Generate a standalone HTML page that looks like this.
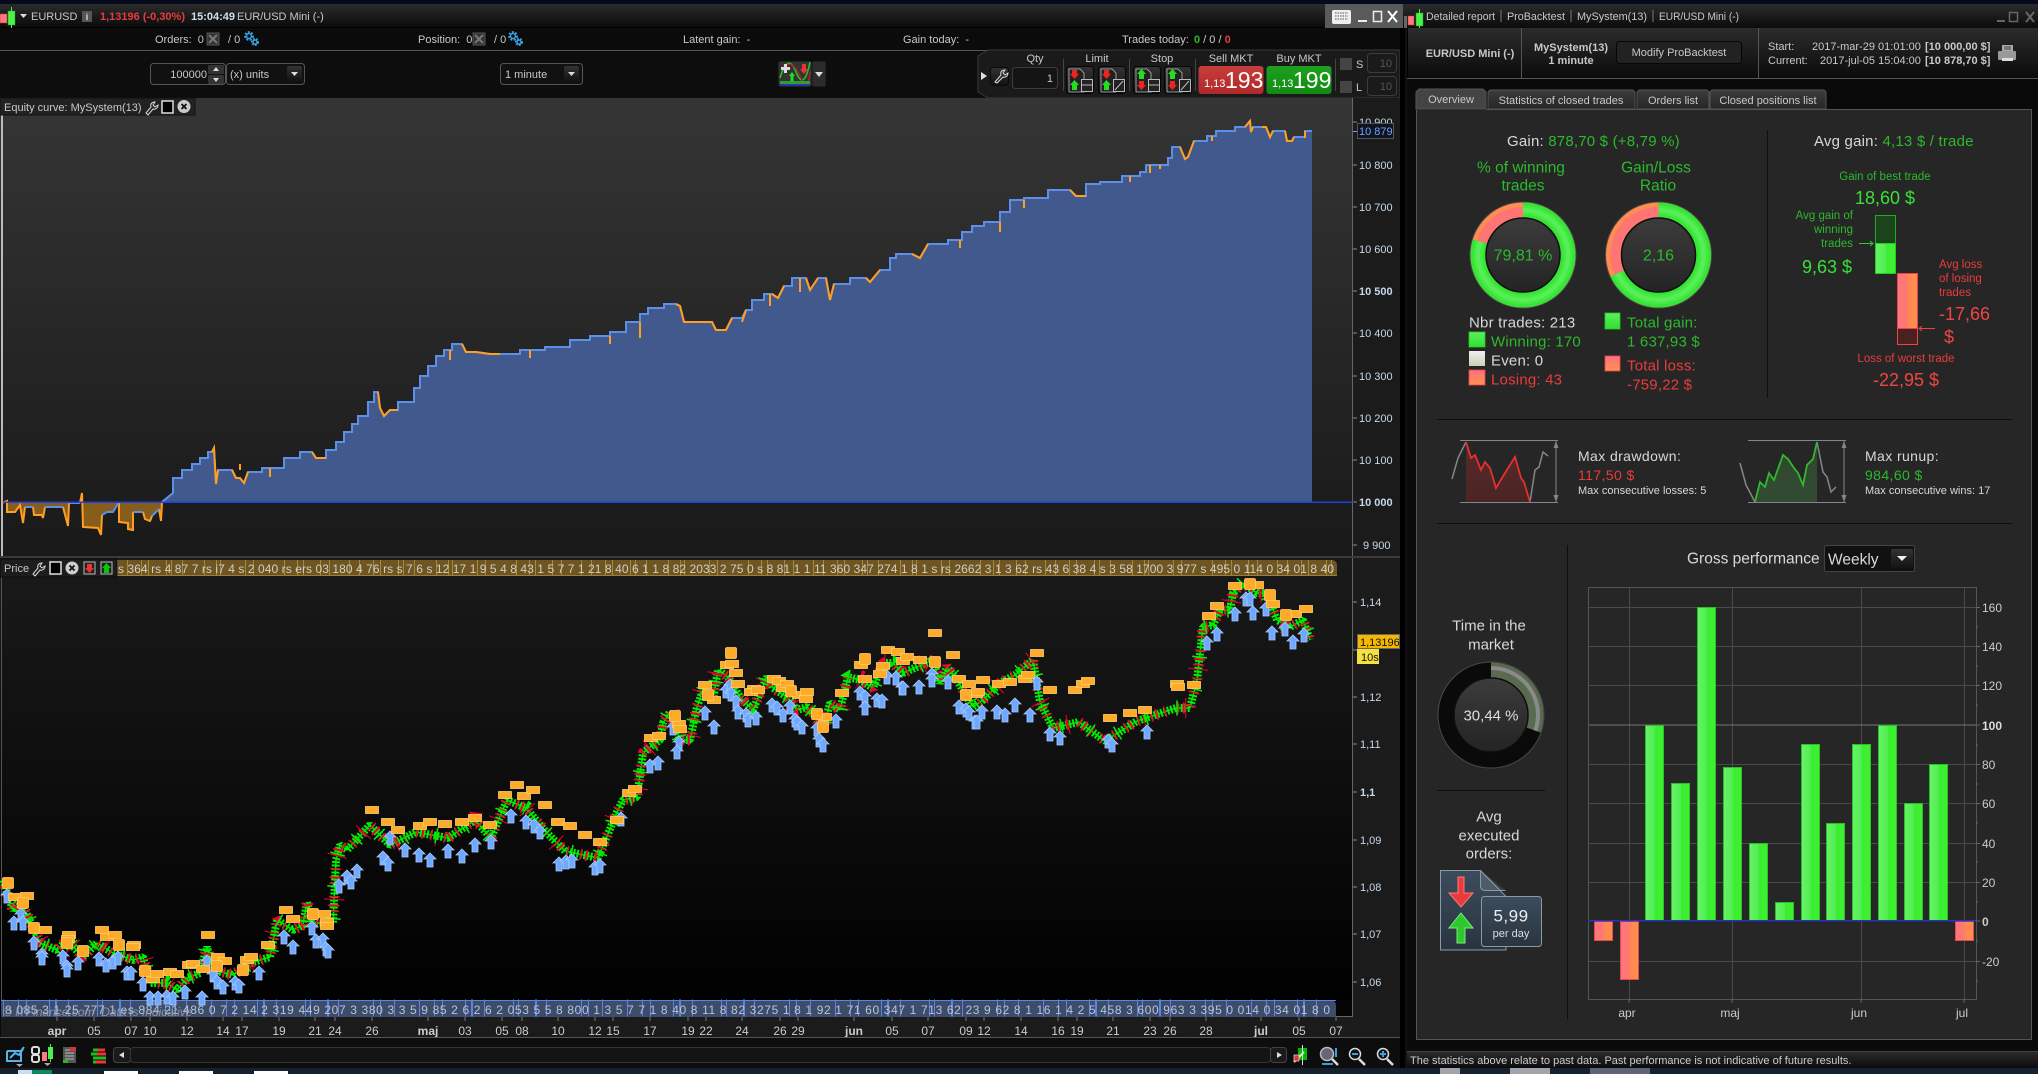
<!DOCTYPE html>
<html><head><meta charset="utf-8"><title>EURUSD</title>
<style>
html,body{margin:0;padding:0;background:#050505;width:2038px;height:1074px;overflow:hidden}
svg{display:block;font-family:"Liberation Sans",Arial,sans-serif}
text{dominant-baseline:central;white-space:pre;transform:translateY(.8px)}
.m{text-anchor:middle}.e{text-anchor:end}.b{font-weight:bold}
.s{font-size:11px;fill:#c8c8c8}
.g{fill:#2db82d}.r{fill:#e83c3c}.w{fill:#d8d8d8}
.G{fill:#38e038}.R{fill:#f04545}
.sc{font-size:11px;fill:#c6d8e8}
.ax{font-size:12px;fill:#ccc;text-anchor:middle}
.l{letter-spacing:.2px}
</style></head><body>
<svg width="2038" height="1074" viewBox="0 0 2038 1074" xmlns="http://www.w3.org/2000/svg">
<defs>
<linearGradient id="tb" x1="0" y1="0" x2="0" y2="1"><stop offset="0" stop-color="#2c2c2c"/><stop offset="1" stop-color="#0b0b0b"/></linearGradient>
<linearGradient id="eq" x1="0" y1="0" x2="0" y2="1"><stop offset="0" stop-color="#353535"/><stop offset="1" stop-color="#191919"/></linearGradient>
<linearGradient id="pr" x1="0" y1="0" x2="0" y2="1"><stop offset="0" stop-color="#1a1a1a"/><stop offset="1" stop-color="#000"/></linearGradient>
<linearGradient id="disc" x1="0" y1="0" x2="0" y2="1"><stop offset="0" stop-color="#3c3c3c"/><stop offset="1" stop-color="#242424"/></linearGradient>
<linearGradient id="gb" x1="0" y1="0" x2="1" y2="0"><stop offset="0" stop-color="#66f266"/><stop offset=".5" stop-color="#52ee52"/><stop offset=".55" stop-color="#39ee30"/><stop offset="1" stop-color="#40f030"/></linearGradient>
<linearGradient id="rb" x1="0" y1="0" x2="1" y2="0"><stop offset="0" stop-color="#ff7480"/><stop offset=".5" stop-color="#ff7a70"/><stop offset=".55" stop-color="#ff8a50"/><stop offset="1" stop-color="#ff8c50"/></linearGradient>
<linearGradient id="gs" x1="0" y1="0" x2="0" y2="1"><stop offset="0" stop-color="#5cf05c"/><stop offset="1" stop-color="#30e030"/></linearGradient>
<linearGradient id="rs" x1="0" y1="0" x2="0" y2="1"><stop offset="0" stop-color="#ff7080"/><stop offset="1" stop-color="#ff9050"/></linearGradient>
<linearGradient id="ws" x1="0" y1="0" x2="0" y2="1"><stop offset="0" stop-color="#f0f0f0"/><stop offset="1" stop-color="#c8d0b8"/></linearGradient>
<linearGradient id="btn" x1="0" y1="0" x2="0" y2="1"><stop offset="0" stop-color="#333"/><stop offset="1" stop-color="#111"/></linearGradient>
<linearGradient id="tab" x1="0" y1="0" x2="0" y2="1"><stop offset="0" stop-color="#3c3c3c"/><stop offset="1" stop-color="#262626"/></linearGradient>
<linearGradient id="sell" x1="0" y1="0" x2="0" y2="1"><stop offset="0" stop-color="#c83c3c"/><stop offset="1" stop-color="#b02828"/></linearGradient>
<linearGradient id="buy" x1="0" y1="0" x2="0" y2="1"><stop offset="0" stop-color="#1ea01e"/><stop offset="1" stop-color="#128a12"/></linearGradient>
<linearGradient id="doc" x1="0" y1="0" x2="0" y2="1"><stop offset="0" stop-color="#3c4c5c"/><stop offset="1" stop-color="#2a3440"/></linearGradient>
<linearGradient id="ddr" x1="0" y1="0" x2="0" y2="1"><stop offset="0" stop-color="#5a2a2a"/><stop offset="1" stop-color="#4a2424"/></linearGradient>
<linearGradient id="ddg" x1="0" y1="0" x2="0" y2="1"><stop offset="0" stop-color="#2f4a2f"/><stop offset="1" stop-color="#324a32"/></linearGradient>
<clipPath id="up"><rect x="0" y="98" width="1353" height="404"/></clipPath>
<clipPath id="dn"><rect x="0" y="502" width="1353" height="54"/></clipPath>
<g id="a"><polygon points="0,-7 6,-1 3,-1 3,7 -3,7 -3,-1 -6,-1" fill="#6ea8ff" stroke="#a9cbff" stroke-width=".8"/></g>
<g id="o"><rect x="-6.5" y="-3.5" width="13" height="7" fill="#ffab2a" stroke="#ffcf6c" stroke-width=".8"/></g>
<g id="q"><rect x="-5.5" y="-5.5" width="11" height="11" rx="1.5" fill="#ffab2a" stroke="#ffcf6c" stroke-width=".8"/></g>
<path id="p" fill="none" stroke-linejoin="bevel" d="M3,880 13,910 20,900 33,927 40,943 57,950 67,940 83,957 97,943 113,953 133,960 143,957 150,983 167,983 177,990 187,978 200,973 207,947 213,970 233,975 250,963 270,957 277,920 293,930 303,925 307,902 313,923 333,923 336,860 340,845 347,850 370,825 390,845 416,832 448,838 475,820 491,838 507,800 526,808 546,832 565,851 598,858 617,812 623,800 637,797 643,753 650,747 660,740 663,723 670,712 680,740 690,740 697,707 703,690 713,700 718,670 728,677 740,697 753,710 760,693 767,677 773,688 787,697 797,710 807,707 813,713 823,730 830,703 840,710 848,677 860,680 873,688 883,663 893,663 903,673 917,667 933,660 940,683 947,667 957,680 973,707 983,700 1000,683 1015,675 1033,660 1040,702 1053,728 1079,722 1105,741 1137,721 1176,708 1190,708 1197,680 1203,627 1213,625 1220,610 1230,610 1233,593 1243,583 1257,593 1267,593 1277,620 1290,627 1303,620 1310,640"/>
</defs>

<!-- page background -->
<rect width="2038" height="1074" fill="#0a0a0a"/>
<rect width="2038" height="4" fill="#050a1c"/>

<!-- LEFT TITLE -->
<rect x="0" y="4" width="1404" height="23" fill="url(#tb)"/>
<rect x="0" y="27" width="1404" height="1" fill="#000"/>
<rect x="0" y="14" width="7" height="9" fill="#ff7a80" stroke="#c33" stroke-width=".5"/>
<rect x="8" y="11" width="7" height="14" fill="#4df04d" stroke="#1a1" stroke-width=".5"/><rect x="11" y="7" width="1" height="22" fill="#4df04d"/>
<polygon points="20,14 27,14 23.5,18" fill="#ddd"/>
<text x="31" y="16" class="s">EURUSD</text>
<rect x="82" y="11" width="10" height="11" fill="#555"/><text x="87" y="16" class="m b" font-size="9" fill="#ddd">i</text>
<text x="100" y="16" font-size="11" fill="#e63c3c" font-weight="bold">1,13196 (-0,30%)</text>
<text x="191" y="16" class="b" font-size="11" fill="#cfe0ee">15:04:49</text>
<text x="237" y="16" class="s">EUR/USD Mini (-)</text>
<rect x="1325" y="4" width="78" height="24" fill="#5a5a5a"/>
<rect x="1332" y="10" width="19" height="14" rx="2" fill="#f0f0f0"/><path d="M1335 13h13M1335 16h13M1335 19h13" stroke="#555" stroke-dasharray="1.5 1" fill="none"/>
<rect x="1358" y="20" width="9" height="2" fill="#eee"/><rect x="1373.5" y="11.500" width="8" height="10" fill="none" stroke="#eee" stroke-width="1.500"/>
<path d="M1388 11l9 11M1397 11l-9 11" stroke="#fff" stroke-width="2"/>

<!-- row2 -->
<rect x="0" y="28" width="1404" height="22" fill="#0b0b0b"/><rect x="0" y="50" width="1404" height="1" fill="#555"/>
<text x="155" y="39" class="s">Orders:  0</text><rect x="207" y="33" width="12" height="12" fill="#333" stroke="#555"/><path d="M209 35l8 8M217 35l-8 8" stroke="#777" stroke-width="2"/>
<text x="228" y="39" class="s">/ 0</text>
<g fill="none" stroke="#39a0e0"><circle cx="249" cy="36" r="2.500" stroke-width="1.500"/><circle cx="249" cy="36" r="4" stroke-width="1.800" stroke-dasharray="2 1.500"/><circle cx="255" cy="42" r="2" stroke-width="1.500"/><circle cx="255" cy="42" r="3.300" stroke-width="1.500" stroke-dasharray="2 1.300"/></g>
<text x="418" y="39" class="s">Position:  0</text><rect x="473" y="33" width="12" height="12" fill="#333" stroke="#555"/><path d="M475 35l8 8M483 35l-8 8" stroke="#777" stroke-width="2"/>
<text x="494" y="39" class="s">/ 0</text>
<g fill="none" stroke="#39a0e0"><circle cx="513" cy="36" r="2.500" stroke-width="1.500"/><circle cx="513" cy="36" r="4" stroke-width="1.800" stroke-dasharray="2 1.500"/><circle cx="519" cy="42" r="2" stroke-width="1.500"/><circle cx="519" cy="42" r="3.300" stroke-width="1.500" stroke-dasharray="2 1.300"/></g>
<text x="683" y="39" class="s">Latent gain:  -</text>
<text x="903" y="39" class="s">Gain today:  -</text>
<text x="1122" y="39" class="s">Trades today:</text>
<text x="1194" y="39" font-size="11"><tspan fill="#2db82d" font-weight="bold">0</tspan><tspan fill="#ccc"> / 0 / </tspan><tspan fill="#e83c3c" font-weight="bold">0</tspan></text>

<!-- row3 -->
<rect x="0" y="51" width="1404" height="47" fill="#0d0d0d"/>
<rect x="150.500" y="63.500" width="75" height="21" rx="3" fill="#111" stroke="#555"/>
<text x="207" y="74" class="s e">100000</text>
<rect x="208" y="65" width="16" height="9" rx="1" fill="#333"/><rect x="208" y="75" width="16" height="9" rx="1" fill="#333"/>
<polygon points="216,67 219,71 213,71" fill="#ddd"/><polygon points="216,82 219,78 213,78" fill="#ddd"/>
<rect x="226.500" y="63.500" width="78" height="21" rx="3" fill="#111" stroke="#555"/>
<text x="230" y="74" class="s">(x) units</text>
<rect x="287" y="66" width="15" height="16" rx="2" fill="url(#btn)"/><polygon points="291,72 298,72 294.500,76" fill="#ddd"/>
<rect x="500.500" y="63.500" width="82" height="21" rx="3" fill="#111" stroke="#555"/>
<text x="505" y="74" class="s">1 minute</text>
<rect x="564" y="66" width="15" height="16" rx="2" fill="url(#btn)"/><polygon points="568,72 575,72 571.500,76" fill="#ddd"/>

<!-- strategy button -->
<rect x="778" y="61" width="34" height="26" rx="3" fill="#333" stroke="#111"/>
<rect x="812" y="61" width="14" height="26" rx="2" fill="#2c2c2c" stroke="#111"/><polygon points="815,72 823,72 819,77" fill="#ddd"/>
<path d="M780 78 q8 -26 16 -6 t14 -10" fill="none" stroke="#2c2" stroke-width="1.500"/><path d="M782 68 q10 -10 18 8 t10 -4" fill="none" stroke="#a22" stroke-width="1.500"/>
<rect x="781" y="67" width="9" height="3" fill="#ddd"/><rect x="784" y="64" width="3" height="9" fill="#ddd"/>
<polygon points="802,64 806,64 806,69 808,69 804,74 800,69 802,69" fill="#e33"/>
<polygon points="792,72 795,76 793.500,76 793.500,81 790.500,81 790.500,76 789,76" fill="#2d2"/>
<rect x="780" y="81" width="30" height="3" fill="#2fa02f"/><rect x="780" y="84" width="30" height="1.500" fill="#23d"/>

<!-- trading panel -->
<path d="M1400 50H988l-10 6v36l10 6h412z" fill="#1a1a1a" stroke="#3a3a3a"/>
<polygon points="981,72 987,76 981,80" fill="#ddd"/>
<rect x="990.500" y="67.500" width="18" height="18" rx="3" fill="url(#btn)" stroke="#0a0a0a"/>
<path d="M995 82l6-7c-1-3 1-5 4-5l-2 3 2 2 3-2c0 3-3 5-5 4l-6 6z" fill="none" stroke="#ddd"/>
<text x="1035" y="58" class="s m">Qty</text>
<rect x="1012.500" y="67.500" width="45" height="21" rx="3" fill="#141414" stroke="#3c3c3c"/><text x="1053" y="78" class="s e">1</text>
<rect x="1063" y="59" width="1" height="32" fill="#444"/>
<text x="1097" y="58" class="s m">Limit</text>
<rect x="1066.500" y="66.500" width="27" height="27" rx="3" fill="url(#btn)" stroke="#050505"/>
<rect x="1098.500" y="66.500" width="27" height="27" rx="3" fill="url(#btn)" stroke="#050505"/>
<rect x="1133.500" y="66.500" width="27" height="27" rx="3" fill="url(#btn)" stroke="#050505"/>
<rect x="1164.500" y="66.500" width="27" height="27" rx="3" fill="url(#btn)" stroke="#050505"/>
<path d="M1069 69h11l4 4v19h-15zM1101 69h11l4 4v19h-15zM1136 69h11l4 4v19h-15zM1167 69h11l4 4v19h-15z" fill="#222" stroke="#bbb" stroke-width=".8"/>
<polygon points="1072,70 1077,70 1077,74 1079,74 1074.500,79 1070,74 1072,74" fill="#e22"/><polygon points="1074.500,80 1079,85 1077,85 1077,90 1072,90 1072,85 1070,85" fill="#2d2"/>
<polygon points="1104,70 1109,70 1109,74 1111,74 1106.500,79 1102,74 1104,74" fill="#e22"/><polygon points="1106.500,80 1111,85 1109,85 1109,90 1104,90 1104,85 1102,85" fill="#2d2"/>
<polygon points="1141.500,69 1146,74 1144,74 1144,79 1139,79 1139,74 1137,74" fill="#2d2"/><polygon points="1139,81 1144,81 1144,85 1146,85 1141.500,90 1137,85 1139,85" fill="#e22"/>
<polygon points="1172.500,69 1177,74 1175,74 1175,79 1170,79 1170,74 1168,74" fill="#2d2"/><polygon points="1170,81 1175,81 1175,85 1177,85 1172.500,90 1168,85 1170,85" fill="#e22"/>
<g fill="#222" stroke="#bbb"><rect x="1081.500" y="79.500" width="11" height="12"/><rect x="1113.500" y="79.500" width="11" height="12"/><rect x="1148.500" y="79.500" width="11" height="12"/><rect x="1179.500" y="79.500" width="11" height="12"/></g>
<path d="M1081 85h12M1148 85h12M1115 90l8-9M1181 90l8-9" stroke="#bbb" fill="none"/>
<rect x="1129" y="59" width="1" height="32" fill="#444"/>
<text x="1162" y="58" class="s m">Stop</text>
<rect x="1195" y="59" width="1" height="32" fill="#444"/>
<text x="1231" y="58" class="s m">Sell MKT</text><text x="1299" y="58" class="s m">Buy MKT</text>
<rect x="1198.500" y="66" width="65" height="28" rx="3" fill="url(#sell)"/>
<text x="1204" y="83" font-size="11" fill="#fff">1,13</text><text x="1225" y="79" font-size="23" fill="#fff">193</text>
<rect x="1266.500" y="66" width="65" height="28" rx="3" fill="url(#buy)"/>
<text x="1272" y="83" font-size="11" fill="#fff">1,13</text><text x="1293" y="79" font-size="23" fill="#fff">199</text>
<rect x="1335" y="59" width="1" height="32" fill="#444"/>
<rect x="1340" y="58" width="12" height="12" fill="#444"/><text x="1356" y="64" class="s">S</text>
<rect x="1367.500" y="53.500" width="29" height="19" rx="3" fill="#1a1a1a" stroke="#3c3c3c"/><text x="1392" y="63" class="e" font-size="11" fill="#555">10</text>
<rect x="1340" y="81" width="12" height="12" fill="#444"/><text x="1356" y="87" class="s">L</text>
<rect x="1367.500" y="76.500" width="29" height="19" rx="3" fill="#1a1a1a" stroke="#3c3c3c"/><text x="1392" y="86" class="e" font-size="11" fill="#555">10</text>

<!-- EQUITY CHART -->
<rect x="0" y="98" width="1353" height="458" fill="url(#eq)"/>
<rect x="1353" y="98" width="47" height="476" fill="#1b1b1b"/>
<rect x="1352" y="98" width="1" height="458" fill="#666"/>
<rect x="1400" y="28" width="5" height="1040" fill="#000"/>
<rect x="1405" y="28" width="2" height="1040" fill="#111"/>
<rect x="1" y="115" width="2" height="441" fill="#bbb"/>
<path clip-path="url(#up)" fill="#41598c" d="M162,502 L173,493 V478 H182 V470 H192 V464 H200 V458 H208 V452 H212 L214,448 L216,484 L218,470 H232 L236,478 H240 L244,483 L248,472 H262 V468 H284 V458 H300 V452 H312 L316,458 H326 V450 H336 V442 H344 V432 H352 V424 H358 V416 H368 V402 H374 V392 H378 L380,408 L384,416 L390,410 H398 V402 H414 V388 H420 V376 H428 V366 H436 V356 H444 V350 H452 V344 H462 L466,352 H476 L490,354 H520 V350 H545 V347 H570 V340 H590 V336 H610 V332 H626 V322 H640 V314 H648 V308 H664 V304 H676 L680,306 L684,322 H712 L716,330 H726 L732,318 H742 L746,310 H752 V300 H764 V294 H772 L778,298 L784,286 H792 V278 H806 L810,290 L818,278 H826 L830,300 L834,284 H850 V278 H866 L870,282 L880,270 H890 V258 H896 V254 H912 L920,258 L928,244 H948 V240 H962 V232 H972 V226 H984 V222 H1000 V212 H1010 V200 H1024 V198 H1048 V190 H1070 L1076,196 H1086 V184 H1100 V182 H1122 V176 H1140 V172 H1146 V165 H1168 V158 H1172 V147 H1180 L1185,159 L1188,157 L1194,141 H1207 V136 H1216 V131 H1235 V127 H1245 L1250,121 L1251,132 L1253,127 H1266 L1270,137 L1273,131 H1285 L1287,141 H1292 L1294,137 H1305 V131 H1312 V502Z"/>
<path clip-path="url(#dn)" fill="#875d1c" d="M2,503 7,501 7,512 15,512 20,505 23,523 25,507 33,507 34,515 42,515 43,518 45,507 63,507 68,526 69,503 80,503 82,493 83,527 98,528 101,535 102,515 107,512 113,512 119,502 119,522 128,523 128,529 133,530 133,512 143,512 145,519 150,521 152,516 159,509 161,521 162,502Z"/>
<path fill="none" stroke="#5c8fe8" stroke-width="2" d="M162,502 L173,493 V478 H182 V470 H192 V464 H200 V458 H208 V452 H212 L214,448 L216,484 L218,470 H232 L236,478 H240 L244,483 L248,472 H262 V468 H284 V458 H300 V452 H312 L316,458 H326 V450 H336 V442 H344 V432 H352 V424 H358 V416 H368 V402 H374 V392 H378 L380,408 L384,416 L390,410 H398 V402 H414 V388 H420 V376 H428 V366 H436 V356 H444 V350 H452 V344 H462 L466,352 H476 L490,354 H520 V350 H545 V347 H570 V340 H590 V336 H610 V332 H626 V322 H640 V314 H648 V308 H664 V304 H676 L680,306 L684,322 H712 L716,330 H726 L732,318 H742 L746,310 H752 V300 H764 V294 H772 L778,298 L784,286 H792 V278 H806 L810,290 L818,278 H826 L830,300 L834,284 H850 V278 H866 L870,282 L880,270 H890 V258 H896 V254 H912 L920,258 L928,244 H948 V240 H962 V232 H972 V226 H984 V222 H1000 V212 H1010 V200 H1024 V198 H1048 V190 H1070 L1076,196 H1086 V184 H1100 V182 H1122 V176 H1140 V172 H1146 V165 H1168 V158 H1172 V147 H1180 L1185,159 L1188,157 L1194,141 H1207 V136 H1216 V131 H1235 V127 H1245 L1250,121 L1251,132 L1253,127 H1266 L1270,137 L1273,131 H1285 L1287,141 H1292 L1294,137 H1305 V131 H1312"/>
<path fill="none" stroke="#ff9f22" stroke-width="2" d="M2,503 7,501 7,512 15,512 20,505 23,523 25,507M33,507 34,515 42,515 43,518 45,507M63,507 68,526 69,503M80,503 82,493 83,527 98,528 101,535 102,515M119,502 119,522 128,523 128,529 133,530 133,512M143,512 145,519 150,521 152,516M159,509 161,521 162,502M212,452 214,448 216,484 218,470M232,470 236,478 H240 L244,483 248,472M312,452 316,458 H326M378,392 380,408 384,416 390,410 H398M462,344 466,352 H476 L490,354 H500M676,304 680,306 684,322 H712 L716,330 H726 L732,318M742,322 746,310M772,294 778,298 784,286M806,278 810,290 818,278M826,278 830,300 834,284M866,278 870,282 880,270M912,254 920,258 928,244M1070,190 1076,196 H1086M1180,147 1185,159 1188,157 1194,141M1245,127 1250,121 1251,132 1253,127M1262,127H1266 L1270,137 1273,131M1285,131 1287,141 H1292 L1294,137M1304,137H1305V131M240,470v-6M270,468v9M450,350v10M530,350v8M610,336v8M640,322v16M770,294v12M800,278v14M960,240v8M1000,222v10M1024,200v8M1130,176v6M1150,165v8M1160,165v4M1212,136v5"/>
<path fill="none" stroke="#5c8fe8" stroke-width="2" d="M25,507H33M45,507H63M69,503H80M102,515 107,512 113,512 119,502M133,512H143M152,516 159,509M162,502 173,493"/>
<rect x="3" y="501.500" width="1350" height="1.500" fill="#2040e0"/>
<!-- equity label -->
<rect x="0" y="98" width="195" height="17" fill="#222" stroke="#111"/>
<text x="4" y="107" class="s">Equity curve: MySystem(13)</text>
<path d="M146 113l5-6c-1-3 1-5 4-5l-2 3 2 2 3-2c0 3-3 5-5 4l-5 6z" fill="none" stroke="#ddd"/>
<rect x="162" y="101" width="11" height="12" fill="#000" stroke="#ddd" stroke-width="1.500"/>
<circle cx="184" cy="106.500" r="6.500" fill="#ccc"/><path d="M181.500 104l5 5M186.500 104l-5 5" stroke="#111" stroke-width="1.800"/>
<!-- eq scale -->
<g class="sc">
<text x="1359" y="122" class="sc">10 900</text><text x="1359" y="165" class="sc">10 800</text><text x="1359" y="207" class="sc">10 700</text><text x="1359" y="249" class="sc">10 600</text><text x="1359" y="291" class="sc b" fill="#ddd">10 500</text><text x="1359" y="333" class="sc">10 400</text><text x="1359" y="376" class="sc">10 300</text><text x="1359" y="418" class="sc">10 200</text><text x="1359" y="460" class="sc">10 100</text><text x="1359" y="502" class="sc b">10 000</text><text x="1363" y="545" class="sc">9 900</text>
</g>
<path d="M1353 122h4M1353 165h4M1353 207h4M1353 249h4M1353 291h4M1353 333h4M1353 376h4M1353 418h4M1353 460h4M1353 502h4M1353 545h4" stroke="#888"/>
<rect x="1353" y="131" width="4" height="1" fill="#6ea0ff"/>
<rect x="1357.500" y="123.500" width="36" height="15" fill="#10141e" stroke="#555"/><text x="1359" y="131" font-size="11" fill="#6ea0ff">10 879</text>

<!-- PRICE CHART -->
<rect x="0" y="556" width="1400" height="2" fill="#3a3a3a"/>
<rect x="0" y="558" width="1353" height="459" fill="url(#pr)"/>
<rect x="1353" y="558" width="47" height="480" fill="#1b1b1b"/>
<rect x="1" y="576" width="1" height="424" fill="#555"/>
<rect x="1352" y="558" width="1" height="459" fill="#666"/>
<rect x="1000" y="1016" width="353" height="1" fill="#555"/>
<!-- candles -->
<use href="#p" stroke="#00e800" stroke-width="1.500"/>
<use href="#p" stroke="#00ee00" stroke-width="8" stroke-dasharray="2 1.500"/>
<use href="#p" stroke="#f00030" stroke-width="11" stroke-dasharray="1.500 4 2 7 1.500 12"/>
<use href="#p" stroke="#f00030" stroke-width="20" stroke-dasharray="1 43"/>
<use href="#p" stroke="#00ee00" stroke-width="15" stroke-dasharray="1.500 31"/>
<!-- top strip -->
<path d="M117 560H1332a5 5 0 0 1 5 5V576H117z" fill="#6e5522"/>
<path d="M117 568H1337" stroke="#a58a3c" stroke-width="16" stroke-dasharray="1 9 1 13 1 6 1 17 1 4 1 10 1 21 1 11 1 3 1 24 1 7 1 30 1 12 1 5 1 16 1 8 1 19"/>
<rect x="117" y="575" width="1220" height="1" fill="#9a7f34"/>
<text x="118" y="568" font-size="12" fill="#d0d0c8" textLength="1216" lengthAdjust="spacing">s 364 rs 4 87 7 rs i7 4 s 2 040 rs ers 03 180 4 76 rs s 7 6 s 12 17 1 9 5 4 8 43 1 5 7 7 1 21 8 40 6 1 1 8 82 2033 2 75 0 s 8 81 1 1 11 360 347 274 1 8 1 s rs 2662 3 1 3 62 rs 43 6 38 4 s 3 58 1700 3 977 s 495 0 114 0 34 01 8 40</text>
<rect x="0" y="559" width="117" height="18" fill="#1d1d1d" stroke="#0a0a0a"/>
<text x="4" y="568" class="s">Price</text>
<path d="M33 574l5-6c-1-3 1-5 4-5l-2 3 2 2 3-2c0 3-3 5-5 4l-5 6z" fill="none" stroke="#ddd"/>
<rect x="50" y="562" width="11" height="12" fill="#000" stroke="#ddd" stroke-width="1.500"/>
<circle cx="72" cy="568" r="6.500" fill="#ccc"/><path d="M69.500 565.500l5 5M74.500 565.500l-5 5" stroke="#111" stroke-width="1.800"/>
<rect x="84" y="562" width="11" height="12" fill="#222" stroke="#bbb"/><polygon points="87,564 92,564 92,568 94,568 89.500,573 85,568 87,568" fill="#e33"/>
<rect x="101" y="562" width="11" height="12" fill="#222" stroke="#bbb"/><polygon points="106.500,563 111,568 109,568 109,573 104,573 104,568 102,568" fill="#0c0"/>
<!-- bottom strip -->
<path d="M1 1000H1331a5 5 0 0 1 5 5V1017H1z" fill="#3c4c6a"/>
<path d="M3 1008H1336" stroke="#5a85e0" stroke-width="17" stroke-dasharray="1 14 1 7 1 22 1 5 2 11 1 28 1 4 1 16 2 9 1 34 1 6 1 13 1 24"/>
<rect x="1" y="1000" width="1335" height="1" fill="#5a85e0"/>
<text x="5" y="1009" font-size="12" fill="#b8c4d8" textLength="1325" lengthAdjust="spacing">8 085 3 1 25 777 1 es 884 21 486 0 7 2 14 2 319 449 207 3 380 3 3 5 9 85 2 6 2 6 2 053 5 5 8 800 1 3 5 7 7 1 8 40 8 11 8 82 3275 1 8 1 92 1 71 60 347 1 713 62 23 9 62 8 1 16 1 4 2 5 458 3 600 963 3 395 0 014 0 34 01 8 0</text>
<text x="3" y="1011" font-size="12" font-style="italic" fill="#9aa0aa" opacity=".85">© ITFinance.com  Data is Indicative</text>

<!-- boxes -->
<g>
<use href="#a" x="7" y="896"/><use href="#a" x="14" y="923"/><use href="#a" x="21" y="915"/><use href="#a" x="23" y="923"/><use href="#a" x="34" y="943"/><use href="#a" x="42" y="955"/><use href="#a" x="42" y="958"/><use href="#a" x="63" y="957"/><use href="#a" x="67" y="967"/><use href="#a" x="67" y="970"/><use href="#a" x="78" y="963"/><use href="#a" x="99" y="959"/><use href="#a" x="106" y="965"/><use href="#a" x="113" y="962"/><use href="#a" x="118" y="958"/><use href="#a" x="127" y="973"/><use href="#a" x="131" y="973"/><use href="#a" x="143" y="984"/><use href="#a" x="150" y="998"/><use href="#a" x="158" y="998"/><use href="#a" x="167" y="997"/><use href="#a" x="173" y="998"/><use href="#a" x="185" y="992"/><use href="#a" x="202" y="998"/><use href="#a" x="207" y="962"/><use href="#a" x="213" y="975"/><use href="#a" x="217" y="982"/><use href="#a" x="223" y="987"/><use href="#a" x="235" y="983"/><use href="#a" x="239" y="986"/><use href="#a" x="259" y="973"/><use href="#a" x="284" y="937"/><use href="#a" x="293" y="947"/><use href="#a" x="312" y="928"/><use href="#a" x="316" y="941"/><use href="#a" x="323" y="940"/><use href="#a" x="326" y="949"/><use href="#a" x="328" y="951"/>
<use href="#a" x="339" y="886"/><use href="#a" x="347" y="877"/><use href="#a" x="351" y="882"/><use href="#a" x="357" y="871"/><use href="#a" x="383" y="858"/><use href="#a" x="388" y="864"/><use href="#a" x="390" y="838"/><use href="#a" x="405" y="850"/><use href="#a" x="419" y="855"/><use href="#a" x="430" y="860"/><use href="#a" x="448" y="851"/><use href="#a" x="462" y="856"/><use href="#a" x="475" y="845"/><use href="#a" x="491" y="842"/><use href="#a" x="511" y="816"/><use href="#a" x="526" y="822"/><use href="#a" x="534" y="826"/><use href="#a" x="540" y="832"/><use href="#a" x="559" y="864"/><use href="#a" x="566" y="862"/><use href="#a" x="572" y="861"/><use href="#a" x="595" y="868"/><use href="#a" x="600" y="866"/><use href="#a" x="621" y="819"/><use href="#a" x="650" y="766"/><use href="#a" x="658" y="763"/><use href="#a" x="673" y="728"/><use href="#a" x="679" y="743"/><use href="#a" x="677" y="752"/><use href="#a" x="705" y="713"/><use href="#a" x="714" y="727"/><use href="#a" x="726" y="691"/><use href="#a" x="730" y="686"/><use href="#a" x="731" y="694"/><use href="#a" x="736" y="702"/><use href="#a" x="738" y="712"/><use href="#a" x="746" y="715"/><use href="#a" x="748" y="720"/><use href="#a" x="756" y="718"/><use href="#a" x="772" y="705"/><use href="#a" x="777" y="708"/><use href="#a" x="783" y="715"/><use href="#a" x="790" y="707"/><use href="#a" x="795" y="720"/><use href="#a" x="797" y="723"/><use href="#a" x="802" y="727"/><use href="#a" x="817" y="729"/><use href="#a" x="819" y="740"/><use href="#a" x="823" y="745"/><use href="#a" x="836" y="721"/><use href="#a" x="860" y="693"/><use href="#a" x="865" y="697"/><use href="#a" x="865" y="708"/><use href="#a" x="877" y="700"/><use href="#a" x="882" y="701"/><use href="#a" x="887" y="677"/><use href="#a" x="896" y="678"/><use href="#a" x="902" y="688"/><use href="#a" x="903" y="688"/><use href="#a" x="919" y="687"/><use href="#a" x="932" y="675"/><use href="#a" x="932" y="680"/><use href="#a" x="948" y="682"/><use href="#a" x="959" y="707"/><use href="#a" x="966" y="710"/><use href="#a" x="969" y="713"/><use href="#a" x="975" y="722"/><use href="#a" x="977" y="722"/><use href="#a" x="982" y="712"/><use href="#a" x="997" y="712"/><use href="#a" x="1005" y="715"/><use href="#a" x="1015" y="705"/><use href="#a" x="1030" y="715"/><use href="#a" x="1037" y="683"/><use href="#a" x="1050" y="734"/><use href="#a" x="1060" y="738"/><use href="#a" x="1108" y="741"/><use href="#a" x="1112" y="745"/><use href="#a" x="1147" y="732"/><use href="#a" x="1207" y="643"/><use href="#a" x="1217" y="634"/><use href="#a" x="1235" y="614"/><use href="#a" x="1246" y="599"/><use href="#a" x="1250" y="599"/><use href="#a" x="1253" y="613"/><use href="#a" x="1266" y="609"/><use href="#a" x="1272" y="633"/><use href="#a" x="1285" y="629"/><use href="#a" x="1293" y="642"/><use href="#a" x="1304" y="635"/>

<use href="#o" x="15" y="897"/><use href="#o" x="27" y="896"/><use href="#o" x="45" y="930"/><use href="#o" x="69" y="935"/><use href="#o" x="68" y="939"/><use href="#o" x="102" y="930"/><use href="#o" x="107" y="937"/><use href="#o" x="115" y="935"/><use href="#o" x="134" y="945"/><use href="#o" x="133" y="947"/><use href="#o" x="153" y="979"/><use href="#o" x="157" y="974"/><use href="#o" x="170" y="972"/><use href="#o" x="177" y="974"/><use href="#o" x="189" y="965"/><use href="#o" x="193" y="964"/><use href="#o" x="203" y="969"/><use href="#o" x="208" y="935"/><use href="#o" x="218" y="957"/><use href="#o" x="225" y="961"/><use href="#o" x="247" y="960"/><use href="#o" x="251" y="957"/><use href="#o" x="268" y="945"/><use href="#o" x="286" y="910"/><use href="#o" x="293" y="919"/><use href="#o" x="324" y="914"/><use href="#o" x="327" y="922"/><use href="#o" x="327" y="926"/>
<use href="#o" x="372" y="810"/><use href="#o" x="388" y="822"/><use href="#o" x="398" y="830"/><use href="#o" x="420" y="826"/><use href="#o" x="430" y="822"/><use href="#o" x="445" y="824"/><use href="#o" x="462" y="822"/><use href="#o" x="475" y="818"/><use href="#o" x="490" y="825"/><use href="#o" x="505" y="795"/><use href="#o" x="517" y="785"/><use href="#o" x="524" y="796"/><use href="#o" x="533" y="790"/><use href="#o" x="545" y="805"/><use href="#o" x="558" y="822"/><use href="#o" x="570" y="826"/><use href="#o" x="585" y="835"/><use href="#o" x="600" y="842"/><use href="#o" x="617" y="820"/>
<use href="#o" x="629" y="793"/><use href="#o" x="635" y="789"/><use href="#o" x="651" y="738"/><use href="#o" x="659" y="736"/><use href="#o" x="679" y="724"/><use href="#o" x="680" y="729"/><use href="#o" x="705" y="685"/><use href="#o" x="714" y="700"/><use href="#o" x="727" y="665"/><use href="#o" x="732" y="664"/><use href="#o" x="736" y="673"/><use href="#o" x="738" y="684"/><use href="#o" x="754" y="689"/><use href="#o" x="751" y="692"/><use href="#o" x="758" y="690"/><use href="#o" x="774" y="679"/><use href="#o" x="779" y="681"/><use href="#o" x="783" y="688"/><use href="#o" x="787" y="684"/><use href="#o" x="799" y="695"/><use href="#o" x="806" y="699"/><use href="#o" x="807" y="692"/><use href="#o" x="825" y="717"/><use href="#o" x="842" y="693"/><use href="#o" x="865" y="679"/><use href="#o" x="861" y="665"/><use href="#o" x="880" y="674"/><use href="#o" x="883" y="666"/><use href="#o" x="888" y="650"/><use href="#o" x="898" y="652"/><use href="#o" x="903" y="661"/><use href="#o" x="907" y="657"/><use href="#o" x="920" y="660"/><use href="#o" x="935" y="633"/><use href="#o" x="953" y="655"/><use href="#o" x="959" y="679"/><use href="#o" x="969" y="684"/><use href="#o" x="976" y="694"/><use href="#o" x="978" y="692"/><use href="#o" x="983" y="680"/><use href="#o" x="999" y="684"/><use href="#o" x="1010" y="682"/><use href="#o" x="1025" y="679"/><use href="#o" x="1028" y="675"/><use href="#o" x="1037" y="653"/><use href="#o" x="1050" y="690"/><use href="#o" x="1075" y="690"/><use href="#o" x="1083" y="684"/><use href="#o" x="1088" y="681"/><use href="#o" x="1110" y="718"/><use href="#o" x="1130" y="713"/><use href="#o" x="1145" y="710"/><use href="#o" x="1177" y="684"/><use href="#o" x="1178" y="687"/><use href="#o" x="1194" y="685"/><use href="#o" x="1209" y="616"/><use href="#o" x="1217" y="606"/><use href="#o" x="1235" y="586"/><use href="#o" x="1257" y="585"/><use href="#o" x="1273" y="604"/><use href="#o" x="1295" y="614"/><use href="#o" x="1306" y="609"/>

<use href="#q" x="8" y="883"/><use href="#q" x="23" y="903"/><use href="#q" x="34" y="928"/><use href="#q" x="67" y="943"/><use href="#q" x="83" y="951"/><use href="#q" x="119" y="945"/><use href="#q" x="145" y="971"/><use href="#q" x="217" y="966"/><use href="#q" x="243" y="970"/><use href="#q" x="313" y="914"/><use href="#q" x="675" y="716"/><use href="#q" x="708" y="695"/><use href="#q" x="731" y="653"/><use href="#q" x="791" y="691"/><use href="#q" x="817" y="714"/><use href="#q" x="823" y="727"/><use href="#q" x="865" y="659"/><use href="#q" x="935" y="662"/><use href="#q" x="966" y="695"/><use href="#q" x="1250" y="584"/><use href="#q" x="1270" y="595"/><use href="#q" x="1286" y="615"/>
</g>
<!-- price scale -->
<text x="1360" y="602" class="sc">1,14</text><text x="1360" y="697" class="sc">1,12</text><text x="1360" y="744" class="sc">1,11</text><text x="1360" y="792" class="sc b">1,1</text><text x="1360" y="840" class="sc">1,09</text><text x="1360" y="887" class="sc">1,08</text><text x="1360" y="934" class="sc">1,07</text><text x="1360" y="982" class="sc">1,06</text>
<path d="M1353 602h4M1353 697h4M1353 744h4M1353 792h4M1353 840h4M1353 887h4M1353 934h4M1353 982h4M1353 650h4" stroke="#888"/>
<rect x="1357.500" y="634.500" width="42" height="14" fill="#f5b800" stroke="#666"/><text x="1360" y="642" font-size="11" fill="#111">1,13196</text>
<rect x="1357" y="649" width="22" height="15" fill="#f5e040"/><text x="1361" y="657" font-size="11" fill="#111">10s</text>

<!-- x axis -->
<rect x="1" y="1017" width="1352" height="20" fill="#1b1b1b"/>
<rect x="1336" y="1000" width="17" height="17" fill="#050505"/>
<rect x="1352" y="960" width="1" height="57" fill="#666"/>
<rect x="1336" y="1016" width="17" height="1" fill="#666"/>
<text x="57" y="1030" class="ax b">apr</text><text x="94" y="1030" class="ax">05</text><text x="131" y="1030" class="ax">07</text><text x="150" y="1030" class="ax">10</text><text x="187" y="1030" class="ax">12</text><text x="223" y="1030" class="ax">14</text><text x="242" y="1030" class="ax">17</text><text x="279" y="1030" class="ax">19</text><text x="315" y="1030" class="ax">21</text><text x="335" y="1030" class="ax">24</text><text x="372" y="1030" class="ax">26</text><text x="428" y="1030" class="ax b">maj</text><text x="465" y="1030" class="ax">03</text><text x="502" y="1030" class="ax">05</text><text x="522" y="1030" class="ax">08</text><text x="558" y="1030" class="ax">10</text><text x="595" y="1030" class="ax">12</text><text x="613" y="1030" class="ax">15</text><text x="650" y="1030" class="ax">17</text><text x="688" y="1030" class="ax">19</text><text x="706" y="1030" class="ax">22</text><text x="742" y="1030" class="ax">24</text><text x="780" y="1030" class="ax">26</text><text x="798" y="1030" class="ax">29</text><text x="854" y="1030" class="ax b">jun</text><text x="892" y="1030" class="ax">05</text><text x="928" y="1030" class="ax">07</text><text x="966" y="1030" class="ax">09</text><text x="984" y="1030" class="ax">12</text><text x="1021" y="1030" class="ax">14</text><text x="1058" y="1030" class="ax">16</text><text x="1077" y="1030" class="ax">19</text><text x="1113" y="1030" class="ax">21</text><text x="1150" y="1030" class="ax">23</text><text x="1170" y="1030" class="ax">26</text><text x="1206" y="1030" class="ax">28</text><text x="1261" y="1030" class="ax b">jul</text><text x="1299" y="1030" class="ax">05</text><text x="1336" y="1030" class="ax">07</text>
<path d="M57 1017v4M94 1017v4M131 1017v4M150 1017v4M187 1017v4M223 1017v4M242 1017v4M279 1017v4M315 1017v4M335 1017v4M372 1017v4M428 1017v4M465 1017v4M502 1017v4M522 1017v4M558 1017v4M595 1017v4M613 1017v4M650 1017v4M688 1017v4M706 1017v4M742 1017v4M780 1017v4M798 1017v4M854 1017v4M892 1017v4M928 1017v4M966 1017v4M984 1017v4M1021 1017v4M1058 1017v4M1077 1017v4M1113 1017v4M1150 1017v4M1170 1017v4M1206 1017v4M1261 1017v4M1299 1017v4M1336 1017v4" stroke="#777"/>
<rect x="0" y="1037" width="1400" height="1" fill="#555"/>
<rect x="0" y="1038" width="1400" height="30" fill="#0d0d0d"/>

<!-- bottom toolbar -->
<path d="M7 1051h14l3-4M7 1051v10h14v-10M10 1058l5-5 4 2 4-6" fill="none" stroke="#5ab0e8" stroke-width="2"/><polygon points="16,1064 23,1064 19.500,1067" fill="#aaa"/>
<rect x="32" y="1047" width="7" height="7" rx="2" fill="none" stroke="#ddd" stroke-width="2"/><rect x="32" y="1055" width="7" height="7" rx="2" fill="none" stroke="#ddd" stroke-width="2"/>
<rect x="42" y="1052" width="5" height="9" fill="#ff7a80"/><rect x="48" y="1047" width="5" height="12" fill="#4df04d"/><rect x="50" y="1044" width="1" height="18" fill="#4df04d"/><polygon points="44,1063 51,1063 47.500,1066" fill="#aaa"/>
<rect x="63" y="1047" width="13" height="16" fill="#555"/><path d="M65 1050h9M65 1053h9M65 1056h9M65 1059h9" stroke="#bbb"/><rect x="70" y="1047" width="6" height="4" fill="#d33"/><rect x="63" y="1060" width="5" height="3" fill="#2b2"/>
<path d="M93 1050h9M91 1054h8M93 1058h13M93 1062h7" stroke="#2b2" stroke-width="3"/><path d="M98 1050h7M97 1054h9M96 1062h10" stroke="#e33" stroke-width="3"/>
<rect x="113.500" y="1047.500" width="17" height="15" rx="3" fill="#1a1a1a" stroke="#444"/><polygon points="124,1052 124,1058 119,1055" fill="#ddd"/>
<rect x="130.500" y="1047.500" width="1140" height="15" rx="3" fill="#141414" stroke="#333"/>
<rect x="1270.500" y="1047.500" width="16" height="15" rx="3" fill="#1a1a1a" stroke="#444"/><polygon points="1277,1052 1277,1058 1282,1055" fill="#ddd"/>
<rect x="1298" y="1048" width="9" height="12" fill="#0b0"/><rect x="1302" y="1045" width="1" height="20" fill="#ddd"/><path d="M1294 1062l10-10" stroke="#ddd" stroke-width="2"/><rect x="1294" y="1055" width="5" height="6" fill="#d33" stroke="#ddd" stroke-width=".7"/>
<circle cx="1327" cy="1054" r="6.500" fill="#667" stroke="#bbb" stroke-width="1.500"/><path d="M1332 1059l6 6" stroke="#ddd" stroke-width="2.500"/><path d="M1336 1048v9M1322 1064h11" stroke="#39a0e0" stroke-width="2"/>
<circle cx="1355" cy="1054" r="5.500" fill="#111" stroke="#ddd" stroke-width="1.500"/><path d="M1352 1054h6" stroke="#39a0e0" stroke-width="2"/><path d="M1359 1059l6 6" stroke="#ddd" stroke-width="2.500"/>
<circle cx="1383" cy="1054" r="5.500" fill="#111" stroke="#ddd" stroke-width="1.500"/><path d="M1380 1054h6M1383 1051v6" stroke="#39a0e0" stroke-width="2"/><path d="M1387 1059l6 6" stroke="#ddd" stroke-width="2.500"/>

<!-- RIGHT WINDOW -->
<rect x="1404" y="4" width="634" height="24" fill="url(#tb)"/>
<rect x="1404" y="16" width="3" height="12" fill="#666"/>
<rect x="1408" y="16" width="6" height="9" fill="#ff7a80" stroke="#c33" stroke-width=".5"/>
<rect x="1416" y="13" width="7" height="13" fill="#4df04d" stroke="#1a1" stroke-width=".5"/><rect x="1419" y="9" width="1" height="21" fill="#4df04d"/>
<text x="1426" y="16" class="s" textLength="69" lengthAdjust="spacingAndGlyphs">Detailed report</text><text x="1507" y="16" class="s" textLength="58" lengthAdjust="spacingAndGlyphs">ProBacktest</text><text x="1577" y="16" class="s" textLength="70" lengthAdjust="spacingAndGlyphs">MySystem(13)</text><text x="1659" y="16" class="s" textLength="80" lengthAdjust="spacingAndGlyphs">EUR/USD Mini (-)</text>
<path d="M1501 10v12M1571 10v12M1653 10v12" stroke="#777"/>
<rect x="1997" y="20" width="8" height="2" fill="#666"/><rect x="2009.500" y="12.500" width="8" height="9" fill="none" stroke="#666" stroke-width="1.500"/>
<path d="M2026 12l8 10M2034 12l-8 10" stroke="#666" stroke-width="2"/>
<!-- header -->
<rect x="1407" y="28" width="631" height="50" fill="url(#tb)"/>
<rect x="1407" y="78" width="631" height="1" fill="#555"/>
<rect x="1407" y="28" width="1" height="50" fill="#000"/><rect x="1521" y="28" width="1" height="50" fill="#555"/><rect x="1758" y="28" width="1" height="50" fill="#555"/>
<text x="1470" y="53" class="s m b" fill="#ddd">EUR/USD Mini (-)</text>
<text x="1571" y="47" class="s m b" fill="#ddd">MySystem(13)</text><text x="1571" y="60" class="s m b" fill="#ddd">1 minute</text>
<rect x="1616.500" y="41.500" width="125" height="22" rx="3" fill="#222" stroke="#050505"/>
<text x="1679" y="52" class="s m">Modify ProBacktest</text>
<text x="1768" y="46" class="s">Start:</text><text x="1812" y="46" class="s">2017-mar-29 01:01:00</text><text x="1925" y="46" class="s b" fill="#eee">[10 000,00 $]</text>
<text x="1768" y="60" class="s">Current:</text><text x="1820" y="60" class="s">2017-jul-05 15:04:00</text><text x="1925" y="60" class="s b" fill="#eee">[10 878,70 $]</text>
<rect x="2002" y="45" width="11" height="6" fill="#aaa"/><rect x="1998" y="51" width="18" height="9" rx="1" fill="#999"/><rect x="2002" y="58" width="11" height="3" fill="#ddd"/><path d="M2004 47h7M2004 49h7" stroke="#444"/>
<!-- tabs -->
<path d="M1416 109V92l3-3h64l3 3v17z" fill="#444" stroke="#555"/>
<path d="M1488 109V92l2-2h143l2 2v17zM1637 109V92l2-2h68l2 2v17zM1710 109V92l2-2h112l2 2v17z" fill="url(#tab)" stroke="#555"/>
<text x="1451" y="99" class="s m">Overview</text><text x="1561" y="100" class="s m">Statistics of closed trades</text><text x="1673" y="100" class="s m">Orders list</text><text x="1768" y="100" class="s m">Closed positions list</text>
<!-- panel -->
<rect x="1416.500" y="109.500" width="615" height="930" fill="#262626" stroke="#555"/>
<rect x="1416" y="109" width="70" height="1" fill="#333"/>
<text x="1507" y="140" font-size="15" class="w l"><tspan>Gain: </tspan><tspan class="g">878,70 $ (+8,79 %)</tspan></text>
<rect x="1767" y="130" width="1" height="268" fill="#0f0f0f"/>
<text x="1814" y="140" font-size="15" class="w l"><tspan>Avg gain: </tspan><tspan class="g">4,13 $ / trade</tspan></text>
<text x="1521" y="167" font-size="15.500" class="g m">% of winning</text><text x="1523" y="185" font-size="15.500" class="g m">trades</text>
<text x="1656" y="167" font-size="15.500" class="g m">Gain/Loss</text><text x="1658" y="185" font-size="15.500" class="g m">Ratio</text>
<!-- donut1 -->
<circle cx="1523" cy="255" r="53" fill="none" stroke="#4a4a4a"/>
<circle cx="1523" cy="255" r="45" fill="none" stroke="#ff8c50" stroke-width="15"/>
<circle cx="1523" cy="255" r="43" fill="none" stroke="#ff7474" stroke-width="10"/>
<circle cx="1523" cy="255" r="45" fill="none" stroke="#36e436" stroke-width="15" pathLength="100" stroke-dasharray="79.81 20.19" transform="rotate(-90 1523 255)"/>
<circle cx="1523" cy="255" r="45" fill="none" stroke="#45ea45" stroke-width="9" pathLength="100" stroke-dasharray="79.81 20.19" transform="rotate(-90 1523 255)"/>
<circle cx="1523" cy="255" r="45" fill="none" stroke="#58ee58" stroke-width="4" pathLength="100" stroke-dasharray="79.81 20.19" transform="rotate(-90 1523 255)"/>
<circle cx="1523" cy="255" r="37" fill="url(#disc)" stroke="#0e0e0e" stroke-width="1.500"/>
<text x="1523" y="255" font-size="16" class="g m">79,81 %</text>
<!-- donut2 -->
<circle cx="1658.500" cy="255" r="53" fill="none" stroke="#4a4a4a"/>
<circle cx="1658.500" cy="255" r="45" fill="none" stroke="#ff8c50" stroke-width="15"/>
<circle cx="1658.500" cy="255" r="43" fill="none" stroke="#ff7474" stroke-width="10"/>
<circle cx="1658.500" cy="255" r="45" fill="none" stroke="#36e436" stroke-width="15" pathLength="100" stroke-dasharray="68.3 31.7" transform="rotate(-90 1658.500 255)"/>
<circle cx="1658.500" cy="255" r="45" fill="none" stroke="#45ea45" stroke-width="9" pathLength="100" stroke-dasharray="68.3 31.7" transform="rotate(-90 1658.500 255)"/>
<circle cx="1658.500" cy="255" r="45" fill="none" stroke="#58ee58" stroke-width="4" pathLength="100" stroke-dasharray="68.3 31.7" transform="rotate(-90 1658.500 255)"/>
<circle cx="1658.500" cy="255" r="37" fill="url(#disc)" stroke="#0e0e0e" stroke-width="1.500"/>
<text x="1658.500" y="255" font-size="16" class="g m">2,16</text>
<!-- legend -->
<text x="1469" y="322" font-size="15" class="w l">Nbr trades: 213</text>
<rect x="1469" y="332" width="16" height="15" fill="url(#gs)" stroke="#2c2" stroke-width=".8"/><text x="1491" y="341" font-size="15" class="g l">Winning: 170</text>
<rect x="1469" y="351" width="16" height="15" fill="url(#ws)"/><text x="1491" y="360" font-size="15" class="w l">Even: 0</text>
<rect x="1469" y="370" width="16" height="15" fill="url(#rs)" stroke="#e44" stroke-width=".8"/><text x="1491" y="379" font-size="15" class="r l">Losing: 43</text>
<rect x="1605" y="313" width="15" height="16" fill="url(#gs)" stroke="#2c2" stroke-width=".8"/><text x="1627" y="322" font-size="15" class="g l">Total gain:</text><text x="1627" y="341" font-size="15" class="g l">1 637,93 $</text>
<rect x="1605" y="356" width="15" height="15" fill="url(#rs)" stroke="#e44" stroke-width=".8"/><text x="1627" y="365" font-size="15" class="r l">Total loss:</text><text x="1627" y="384" font-size="15" class="r l">-759,22 $</text>
<!-- avg bars -->
<text x="1885" y="176" font-size="11.500" class="g m">Gain of best trade</text>
<text x="1885" y="197" font-size="18" class="G m">18,60 $</text>
<text x="1853" y="215" font-size="11.500" class="g e">Avg gain of</text><text x="1853" y="229" font-size="11.500" class="g e">winning</text><text x="1853" y="243" font-size="11.500" class="g e">trades</text>
<path d="M1859 243.500h14m-3-2.500l3 2.500-3 2.500" fill="none" stroke="#3c3"/>
<text x="1802" y="266" font-size="18" class="G">9,63 $</text>
<rect x="1875.500" y="215.500" width="20" height="28" fill="#1c441c" stroke="#2a2"/>
<rect x="1875.500" y="243.500" width="20" height="30" fill="url(#gb)" stroke="#2c2"/>
<rect x="1897.500" y="273.500" width="20" height="55" fill="url(#rb)" stroke="#e44"/>
<rect x="1897.500" y="328.500" width="20" height="16" fill="#4a2020" stroke="#e44"/>
<path d="M1919 328.500h16m-13-2.500l-3 2.500 3 2.500" fill="none" stroke="#e44"/>
<text x="1939" y="264" font-size="11.500" class="r">Avg loss</text><text x="1939" y="278" font-size="11.500" class="r">of losing</text><text x="1939" y="292" font-size="11.500" class="r">trades</text>
<text x="1939" y="313" font-size="18" class="R">-17,66</text><text x="1944" y="336" font-size="18" class="R">$</text>
<text x="1906" y="358" font-size="11.500" class="r m">Loss of worst trade</text>
<text x="1906" y="379" font-size="18" class="R m">-22,95 $</text>
<rect x="1437" y="419" width="575" height="1" fill="#0f0f0f"/>
<!-- mini charts -->
<path d="M1466 442 1471 458 1475 455 1481 470 1485 462 1490 468 1496 488 1505 473 1515 457 1521 478 1524 482 1530 502H1466Z" fill="url(#ddr)"/>
<path d="M1452 479 1458 458 1466 442M1530 502 1535 470 1539 467 1543 452 1548 456" fill="none" stroke="#85858f" stroke-width="1.500"/>
<path d="M1466 442 1471 458 1475 455 1481 470 1485 462 1490 468 1496 488 1505 473 1515 457 1521 478 1524 482 1530 502" fill="none" stroke="#e63030" stroke-width="1.800"/>
<path d="M1460 440.500h98M1460 502.500h98M1556 441v61" stroke="#85858f" fill="none"/>
<polygon points="1556,441 1558.500,448 1553.500,448" fill="#85858f"/><polygon points="1556,502 1558.500,495 1553.500,495" fill="#85858f"/>
<text x="1578" y="455" font-size="14" class="w" letter-spacing=".4">Max drawdown:</text>
<text x="1578" y="474" font-size="14" class="r" letter-spacing=".4">117,50 $</text>
<text x="1578" y="490" font-size="11" class="w">Max consecutive losses: 5</text>
<path d="M1755 502 1760 482 1765 487 1769 473 1774 480 1783 455 1788 459 1794 468 1798 473 1803 485 1807 465 1813 459 1817 442V502Z" fill="url(#ddg)"/>
<path d="M1740 463 1746 485 1755 502M1817 442 1823 472 1827 477 1831 492 1836 487" fill="none" stroke="#85858f" stroke-width="1.500"/>
<path d="M1755 502 1760 482 1765 487 1769 473 1774 480 1783 455 1788 459 1794 468 1798 473 1803 485 1807 465 1813 459 1817 442" fill="none" stroke="#30b830" stroke-width="1.800"/>
<path d="M1748 440.500h98M1748 502.500h98M1844 441v61" stroke="#85858f" fill="none"/>
<polygon points="1844,441 1846.500,448 1841.500,448" fill="#85858f"/><polygon points="1844,502 1846.500,495 1841.500,495" fill="#85858f"/>
<text x="1865" y="455" font-size="14" class="w" letter-spacing=".4">Max runup:</text>
<text x="1865" y="474" font-size="14" class="g" letter-spacing=".4">984,60 $</text>
<text x="1865" y="490" font-size="11" class="w">Max consecutive wins: 17</text>
<rect x="1437" y="523" width="575" height="1" fill="#0f0f0f"/>
<rect x="1567" y="545" width="1" height="474" fill="#0f0f0f"/>
<!-- left column -->
<text x="1489" y="625" font-size="15" class="w m">Time in the</text><text x="1491" y="644" font-size="15" class="w m">market</text>
<circle cx="1491" cy="715" r="53" fill="#0a0a0a" stroke="#4a4a4a"/>
<circle cx="1491" cy="715" r="45" fill="none" stroke="#5a6a50" stroke-width="15" pathLength="100" stroke-dasharray="30.44 69.56" transform="rotate(-90 1491 715)"/>
<circle cx="1491" cy="715" r="47" fill="none" stroke="#8a8a8a" stroke-width="4" pathLength="100" stroke-dasharray="30.44 69.56" transform="rotate(-90 1491 715)"/>
<circle cx="1491" cy="715" r="37" fill="url(#disc)" stroke="#0e0e0e" stroke-width="1.500"/>
<text x="1491" y="715" font-size="15" class="m" fill="#ddd">30,44 %</text>
<rect x="1437" y="790" width="108" height="1" fill="#0f0f0f"/>
<text x="1489" y="816" font-size="15" class="w m">Avg</text><text x="1489" y="835" font-size="15" class="w m">executed</text><text x="1489" y="853" font-size="15" class="w m">orders:</text>
<path d="M1440.500 870.500h40l25.500 26V950h-65.500z" fill="url(#doc)" stroke="#8a9aa8"/>
<path d="M1480.500 870.500v15q0 5 5 5h20" fill="#c8d0d8" fill-opacity=".15" stroke="#8a9aa8"/>
<polygon points="1458,877 1464,877 1464,893 1473,893 1461,907 1449,893 1458,893" fill="#e83c3c" stroke="#f77"/>
<polygon points="1461,913 1473,928 1465,928 1465,943 1457,943 1457,928 1449,928" fill="#2fc82f" stroke="#7e7"/>
<rect x="1481.500" y="896.500" width="60" height="50" rx="3" fill="url(#doc)" stroke="#8a9aa8"/>
<text x="1511" y="915" font-size="17" class="m" fill="#eee" letter-spacing=".5">5,99</text>
<text x="1511" y="933" font-size="11" class="m" fill="#ddd">per day</text>
<!-- gross -->
<text x="1687" y="558" font-size="15.500" class="w">Gross performance</text>
<rect x="1824.500" y="545.500" width="90" height="26" rx="2" fill="#111" stroke="#444"/>
<text x="1828" y="559" font-size="15.500" class="w">Weekly</text>
<rect x="1891" y="549" width="22" height="20" rx="2" fill="url(#btn)"/><polygon points="1897,556 1907,556 1902,561" fill="#eee"/>
<!-- bar chart -->
<path d="M1588 607.500h388M1588 646.500h388M1588 685.500h388M1588 764.500h388M1588 803.500h388M1588 843.500h388M1588 882.500h388M1588 961.500h388M1629.500 587v412M1732.500 587v412M1861.500 587v412M1964.500 587v412" stroke="#4a4a4a"/>
<rect x="1588" y="724.500" width="388" height="1" fill="#777"/>
<rect x="1588.500" y="587.500" width="388" height="412" fill="none" stroke="#555"/>
<path d="M1976 607.500h4M1976 627h2M1976 646.500h4M1976 666h2M1976 685.500h4M1976 705h2M1976 725h4M1976 745h2M1976 764.500h4M1976 784h2M1976 803.500h4M1976 823h2M1976 843.500h4M1976 862h2M1976 882.500h4M1976 902h2M1976 921h4M1976 941h2M1976 961.500h4M1976 981h2M1629 999v4M1732 999v4M1861 999v4M1964 999v4" stroke="#666"/>
<g stroke="#2ac02a" stroke-width="1" fill="url(#gb)">
<rect x="1645.500" y="725.500" width="18" height="195"/><rect x="1671.500" y="783.500" width="18" height="137"/><rect x="1697.500" y="607.500" width="18" height="313"/><rect x="1723.500" y="767.500" width="18" height="153"/><rect x="1749.500" y="843.500" width="18" height="77"/><rect x="1775.500" y="902.500" width="18" height="18"/><rect x="1801.500" y="744.500" width="18" height="176"/><rect x="1826.500" y="823.500" width="18" height="97"/><rect x="1852.500" y="744.500" width="18" height="176"/><rect x="1878.500" y="725.500" width="18" height="195"/><rect x="1904.500" y="803.500" width="18" height="117"/><rect x="1929.500" y="764.500" width="18" height="156"/>
</g>
<g stroke="#e84a4a" stroke-width="1" fill="url(#rb)">
<rect x="1594.500" y="921.500" width="18" height="19"/><rect x="1620.500" y="921.500" width="18" height="58"/><rect x="1955.500" y="921.500" width="18" height="19"/>
</g>
<rect x="1588" y="920" width="388" height="1.500" fill="#2a30c0"/>
<g font-size="12" fill="#ccc"><text x="1982" y="607">160</text><text x="1982" y="646">140</text><text x="1982" y="685">120</text><text x="1982" y="725" class="b" fill="#ddd">100</text><text x="1982" y="764">80</text><text x="1982" y="803">60</text><text x="1982" y="843">40</text><text x="1982" y="882">20</text><text x="1982" y="921" class="b">0</text><text x="1982" y="961">-20</text></g>
<g font-size="12" fill="#ccc" text-anchor="middle"><text x="1627" y="1012">apr</text><text x="1730" y="1012">maj</text><text x="1859" y="1012">jun</text><text x="1962" y="1012">jul</text></g>
<!-- status -->
<rect x="1407" y="1040" width="631" height="11" fill="#0a0a0a"/>
<rect x="1407" y="1051" width="631" height="17" fill="url(#tb)"/><rect x="1407" y="1051" width="631" height="1" fill="#444"/>
<text x="1410" y="1060" font-size="11" fill="#ccc">The statistics above relate to past data. Past performance is not indicative of future results.</text>
<!-- desktop strip -->
<rect x="0" y="1068" width="2038" height="6" fill="#15212e"/>
<rect x="18" y="1070" width="14" height="4" fill="#cde"/><rect x="32" y="1070" width="20" height="4" fill="#0c8a5a"/>
<rect x="104" y="1071" width="34" height="3" fill="#fff"/><rect x="179" y="1071" width="34" height="3" fill="#fff"/><rect x="254" y="1071" width="34" height="3" fill="#fff"/>
<rect x="1440" y="1068" width="20" height="6" fill="#ddd" opacity=".7"/><rect x="1510" y="1068" width="40" height="6" fill="#ddd" opacity=".7"/><rect x="1590" y="1068" width="60" height="6" fill="#aab" opacity=".5"/>
</svg>
</body></html>
